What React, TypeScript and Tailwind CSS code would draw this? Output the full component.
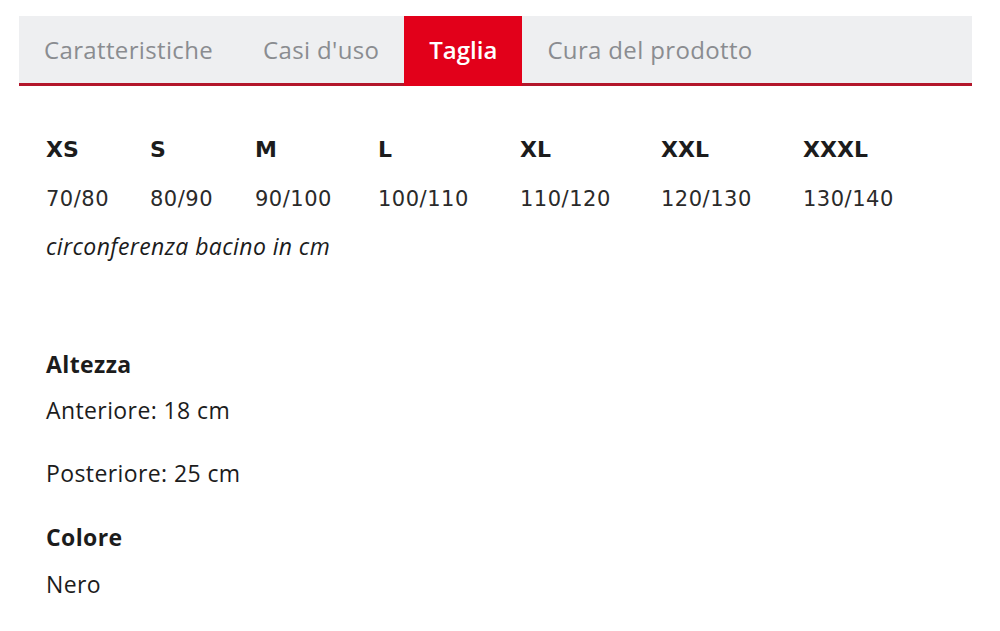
import React from 'react';

const tabs = ['Caratteristiche', "Casi d'uso", 'Taglia', 'Cura del prodotto'];

const sizes = [
  { label: 'XS', range: '70/80' },
  { label: 'S', range: '80/90' },
  { label: 'M', range: '90/100' },
  { label: 'L', range: '100/110' },
  { label: 'XL', range: '110/120' },
  { label: 'XXL', range: '120/130' },
  { label: 'XXXL', range: '130/140' },
];

export default function App() {
  return (
    <div className="min-h-[631px] bg-white pt-4 text-[#1c1c1c]" style={{ fontFamily: '"Open Sans", "Noto Sans", sans-serif' }}>
      {/* Tabs */}
      <div className="mx-[19px] w-[953px] flex bg-[#eeeff1] border-b-[3px] border-[#b3162a] h-[70px]">
        {tabs.map((t) => (
          <div
            key={t}
            className={`px-[25px] pb-[3px] flex items-center text-[24px] tracking-[0.35px] h-[70px] ${t === 'Taglia' ? 'bg-[#e2001a] text-white font-semibold tracking-normal -mb-[3px]' : 'text-[#8a8c90]'}`}
          >
            {t}
          </div>
        ))}
      </div>

      {/* Size table */}
      <div className="pl-[46px] pt-[39px]" style={{ fontFamily: '"DejaVu Sans", Verdana, sans-serif' }}>
        <div className="grid grid-cols-[104px_105px_123px_142px_141px_142px_auto]">
          {sizes.map((s) => (
            <div key={s.label} className="font-bold text-[22px] h-[48px] flex items-center">{s.label}</div>
          ))}
          {sizes.map((s) => (
            <div key={s.range} className="h-[48px] pt-[5px] text-[21px] tracking-[0.5px] flex items-center text-[#2a2a2a]">{s.range}</div>
          ))}
        </div>
        <div className="italic text-[23px] tracking-[0.4px] h-[50px] flex items-center" style={{ fontFamily: '"Open Sans", sans-serif' }}>
          circonferenza bacino in cm
        </div>
      </div>

      {/* Details */}
      <div className="pl-[46px] pt-[73px] text-[23px] tracking-[0.4px]">
        <div className="font-bold h-[40px] flex items-center">Altezza</div>
        <div className="h-[52px] flex items-center">Anteriore: 18 cm</div>
        <div className="h-[74px] flex items-center">Posteriore: 25 cm</div>
        <div className="font-bold h-[54px] flex items-center">Colore</div>
        <div className="h-[40px] flex items-center">Nero</div>
      </div>
    </div>
  );
}
